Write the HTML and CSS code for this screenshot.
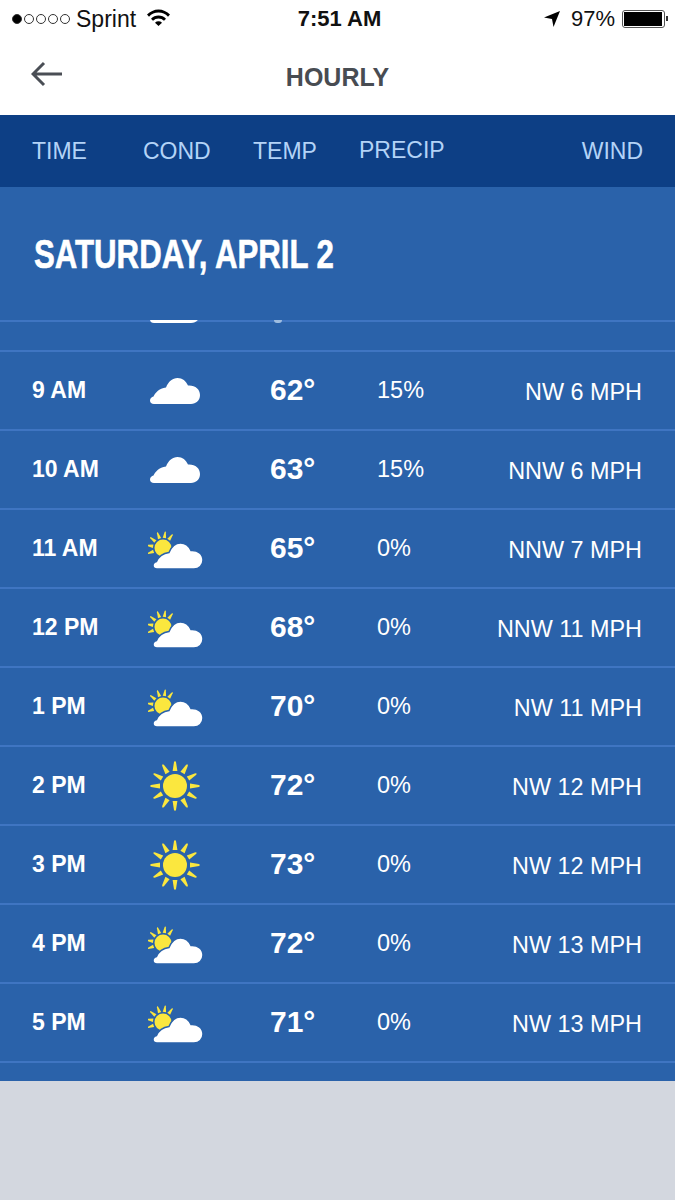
FILE: index.html
```html
<!DOCTYPE html>
<html>
<head>
<meta charset="utf-8">
<title>Hourly</title>
<link rel="stylesheet" href="styles.css">
</head>
<body>
<svg class="defs" width="0" height="0">
	<defs>
		<path id="cloud-shape" d="M4 26C1.500 26 0 24.500 0 22.500C0 20.500 1.500 19 3.500 18.500C5 15 9 10.500 16 9.500C18.500 3.500 22.500 0 27.500 0C32.500 0 36 3 38 7.500C45 7 50 11 50 17C50 22.500 46 26 41 26Z"/>
		<path id="ray-big" d="M-2.400 -15L-1 -24L0 -25L1 -24L2.400 -15Z"/>
		<path id="ray-small" d="M-1.700 -10L-.6 -16L0 -17L.6 -16L1.700 -10Z"/>
		<symbol id="icon-cloud" viewBox="0 0 50 26"><use href="#cloud-shape" fill="#fff"/></symbol>
		<symbol id="icon-sun" viewBox="0 0 50 50">
			<g transform="translate(25 25)" fill="#fbe73e">
				<circle r="12"/>
				<use href="#ray-big"/>
				<use href="#ray-big" transform="rotate(30)"/>
				<use href="#ray-big" transform="rotate(60)"/>
				<use href="#ray-big" transform="rotate(90)"/>
				<use href="#ray-big" transform="rotate(120)"/>
				<use href="#ray-big" transform="rotate(150)"/>
				<use href="#ray-big" transform="rotate(180)"/>
				<use href="#ray-big" transform="rotate(210)"/>
				<use href="#ray-big" transform="rotate(240)"/>
				<use href="#ray-big" transform="rotate(270)"/>
				<use href="#ray-big" transform="rotate(300)"/>
				<use href="#ray-big" transform="rotate(330)"/>
			</g>
		</symbol>
		<symbol id="icon-partly" viewBox="0 0 56 38">
			<g transform="translate(15 17)" fill="#fbe73e">
				<circle r="8.500"/>
				<use href="#ray-small" transform="rotate(-110)"/>
				<use href="#ray-small" transform="rotate(-80)"/>
				<use href="#ray-small" transform="rotate(-50)"/>
				<use href="#ray-small" transform="rotate(-20)"/>
				<use href="#ray-small" transform="rotate(8)"/>
				<use href="#ray-small" transform="rotate(35)"/>
			</g>
			<use href="#cloud-shape" x="5" y="12" fill="#fff" stroke="#2a62aa" stroke-width="1.500"/>
		</symbol>
	</defs>
</svg>

<div class="status">
	<div class="status-left">
		<span class="dots"><i class="dot on"></i><i class="dot"></i><i class="dot"></i><i class="dot"></i><i class="dot"></i></span>
		<span>Sprint</span>
		<svg class="wifi" width="23" height="17" viewBox="0 0 23 17">
			<path d="M0 5.500A16 16 0 0 1 23 5.500L21 7.700A13 13 0 0 0 2 7.700Z"/>
			<path d="M4 9.700A10.500 10.500 0 0 1 19 9.700L17 11.800A7.600 7.600 0 0 0 6 11.800Z"/>
			<path d="M8 13.800A5 5 0 0 1 15 13.800L11.500 17Z"/>
		</svg>
	</div>
	<div class="status-time">7:51 AM</div>
	<div class="status-right">
		<svg class="loc" width="16" height="16" viewBox="0 0 16 16"><path d="M16 0L9.500 16L8 8L0 6.500Z"/></svg>
		<span class="pct">97%</span>
		<span class="battery"><i class="battery-fill"></i></span>
	</div>
</div>

<div class="nav">
	<svg class="back" width="32" height="26" viewBox="0 0 32 26"><path d="M13 2L2 13L13 24M2 13H31"/></svg>
	<div class="nav-title">HOURLY</div>
</div>

<div class="cols">
	<span class="col-time">TIME</span>
	<span class="col-cond">COND</span>
	<span class="col-temp">TEMP</span>
	<span class="col-precip">PRECIP</span>
	<span class="col-wind">WIND</span>
</div>

<div class="panel">
	<h1 class="day"><span>SATURDAY, APRIL 2</span></h1>

	<!-- row scrolled under the day heading, only the bottom of its icon shows -->
	<div class="row row-cut">
		<i></i>
		<svg class="icon icon-cl"><use href="#icon-cloud"/></svg>
		<i class="speck"></i>
	</div>
	<div class="row">
		<span class="time">9 AM</span>
		<svg class="icon icon-cl"><use href="#icon-cloud"/></svg>
		<span class="temp">62°</span>
		<span class="precip">15%</span>
		<span class="wind">NW 6 MPH</span>
	</div>
	<div class="row">
		<span class="time">10 AM</span>
		<svg class="icon icon-cl"><use href="#icon-cloud"/></svg>
		<span class="temp">63°</span>
		<span class="precip">15%</span>
		<span class="wind">NNW 6 MPH</span>
	</div>
	<div class="row">
		<span class="time">11 AM</span>
		<svg class="icon icon-pt"><use href="#icon-partly"/></svg>
		<span class="temp">65°</span>
		<span class="precip">0%</span>
		<span class="wind">NNW 7 MPH</span>
	</div>
	<div class="row">
		<span class="time">12 PM</span>
		<svg class="icon icon-pt"><use href="#icon-partly"/></svg>
		<span class="temp">68°</span>
		<span class="precip">0%</span>
		<span class="wind">NNW 11 MPH</span>
	</div>
	<div class="row">
		<span class="time">1 PM</span>
		<svg class="icon icon-pt"><use href="#icon-partly"/></svg>
		<span class="temp">70°</span>
		<span class="precip">0%</span>
		<span class="wind">NW 11 MPH</span>
	</div>
	<div class="row">
		<span class="time">2 PM</span>
		<svg class="icon icon-sn"><use href="#icon-sun"/></svg>
		<span class="temp">72°</span>
		<span class="precip">0%</span>
		<span class="wind">NW 12 MPH</span>
	</div>
	<div class="row">
		<span class="time">3 PM</span>
		<svg class="icon icon-sn"><use href="#icon-sun"/></svg>
		<span class="temp">73°</span>
		<span class="precip">0%</span>
		<span class="wind">NW 12 MPH</span>
	</div>
	<div class="row">
		<span class="time">4 PM</span>
		<svg class="icon icon-pt"><use href="#icon-partly"/></svg>
		<span class="temp">72°</span>
		<span class="precip">0%</span>
		<span class="wind">NW 13 MPH</span>
	</div>
	<div class="row">
		<span class="time">5 PM</span>
		<svg class="icon icon-pt"><use href="#icon-partly"/></svg>
		<span class="temp">71°</span>
		<span class="precip">0%</span>
		<span class="wind">NW 13 MPH</span>
	</div>
</div>
</body>
</html>
```

FILE: styles.css
```css
html, body {
	margin: 0;
	background: #d3d7df;
	font-family: "Liberation Sans", Arial, sans-serif;
}
.defs {
	display: block;
	height: 0;
}

/* status bar */
.status {
	display: grid;
	grid-template-columns: 1fr auto 1fr;
	align-items: center;
	height: 38px;
	padding: 0 7px 0 12px;
	background: #fff;
	color: #111;
	font-size: 23px;
}
.status-left, .status-right {
	display: flex;
	align-items: center;
}
.status-right {
	justify-content: flex-end;
}
.dots {
	display: flex;
	gap: 2px;
	margin-right: 6px;
}
.dot {
	width: 8px;
	height: 8px;
	border: 1px solid #333;
	border-radius: 50%;
}
.dot.on {
	background: #000;
}
.wifi {
	margin-left: 11px;
	margin-bottom: 4px;
}
.status-time {
	font-size: 22px;
	font-weight: bold;
	padding-right: 1px;
}
.loc {
	margin-right: 11px;
}
.pct {
	font-size: 22px;
}
.battery {
	position: relative;
	width: 39px;
	height: 14px;
	margin-left: 7px;
	margin-right: 3px;
	border: 1px solid #555;
	border-radius: 3px;
	padding: 1px;
}
.battery::after {
	content: "";
	position: absolute;
	right: -4px;
	top: 5px;
	width: 2px;
	height: 5px;
	background: #333;
}
.battery-fill {
	display: block;
	width: 97%;
	height: 100%;
	background: #000;
}

/* title bar */
.nav {
	position: relative;
	display: flex;
	justify-content: center;
	align-items: center;
	box-sizing: border-box;
	height: 77px;
	padding-top: 2px;
	background: #fff;
}
.back {
	position: absolute;
	left: 31px;
	top: 23px;
	fill: none;
	stroke: #4a4e55;
	stroke-width: 3;
}
.nav-title {
	font-size: 25px;
	font-weight: bold;
	color: #484c52;
}

/* column heads */
.cols {
	display: grid;
	grid-template-columns: 111px 110px 106px 1fr auto;
	align-items: center;
	height: 72px;
	padding: 0 32px;
	background: #0d3f85;
	color: #b3d3f7;
	font-size: 23px;
}
.col-precip {
	margin-bottom: 2px;
}

/* hourly list */
.panel {
	height: 894px;
	background: #2a62aa;
	color: #fff;
}
.day {
	box-sizing: border-box;
	height: 133px;
	margin: 0;
	padding-top: 45px;
	font-size: 40px;
	line-height: 44px;
}
.day span {
	display: inline-block;
	margin-left: 34px;
	transform: scaleX(.78);
	transform-origin: left;
	-webkit-text-stroke: .6px #fff;
}
.row {
	display: grid;
	grid-template-columns: 118px 120px 107px 1fr auto;
	align-items: center;
	box-sizing: border-box;
	height: 79px;
	padding: 0 33px 0 32px;
	border-bottom: 2px solid #3f75c2;
}
.row-cut {
	align-items: start;
	height: 32px;
	overflow: hidden;
	background: linear-gradient(#3f75c2 2px, transparent 2px);
}
.row-cut .icon-cl {
	margin-top: -23px;
}
.speck {
	width: 8px;
	height: 3px;
	margin-left: 4px;
	border-radius: 0 0 4px 4px;
	background: #9fbde0;
}
.time {
	font-size: 23px;
	font-weight: bold;
}
.temp {
	font-size: 30px;
	font-weight: bold;
	padding-bottom: 2px;
}
.precip {
	font-size: 23.500px;
}
.wind {
	font-size: 23.400px;
	padding-top: 4px;
}
.icon {
	display: block;
	overflow: visible;
}
.icon-cl {
	width: 50px;
	height: 26px;
}
.icon-pt {
	width: 56px;
	height: 38px;
	margin-left: -2px;
	margin-top: 2px;
}
.icon-sn {
	width: 50px;
	height: 50px;
}
```
